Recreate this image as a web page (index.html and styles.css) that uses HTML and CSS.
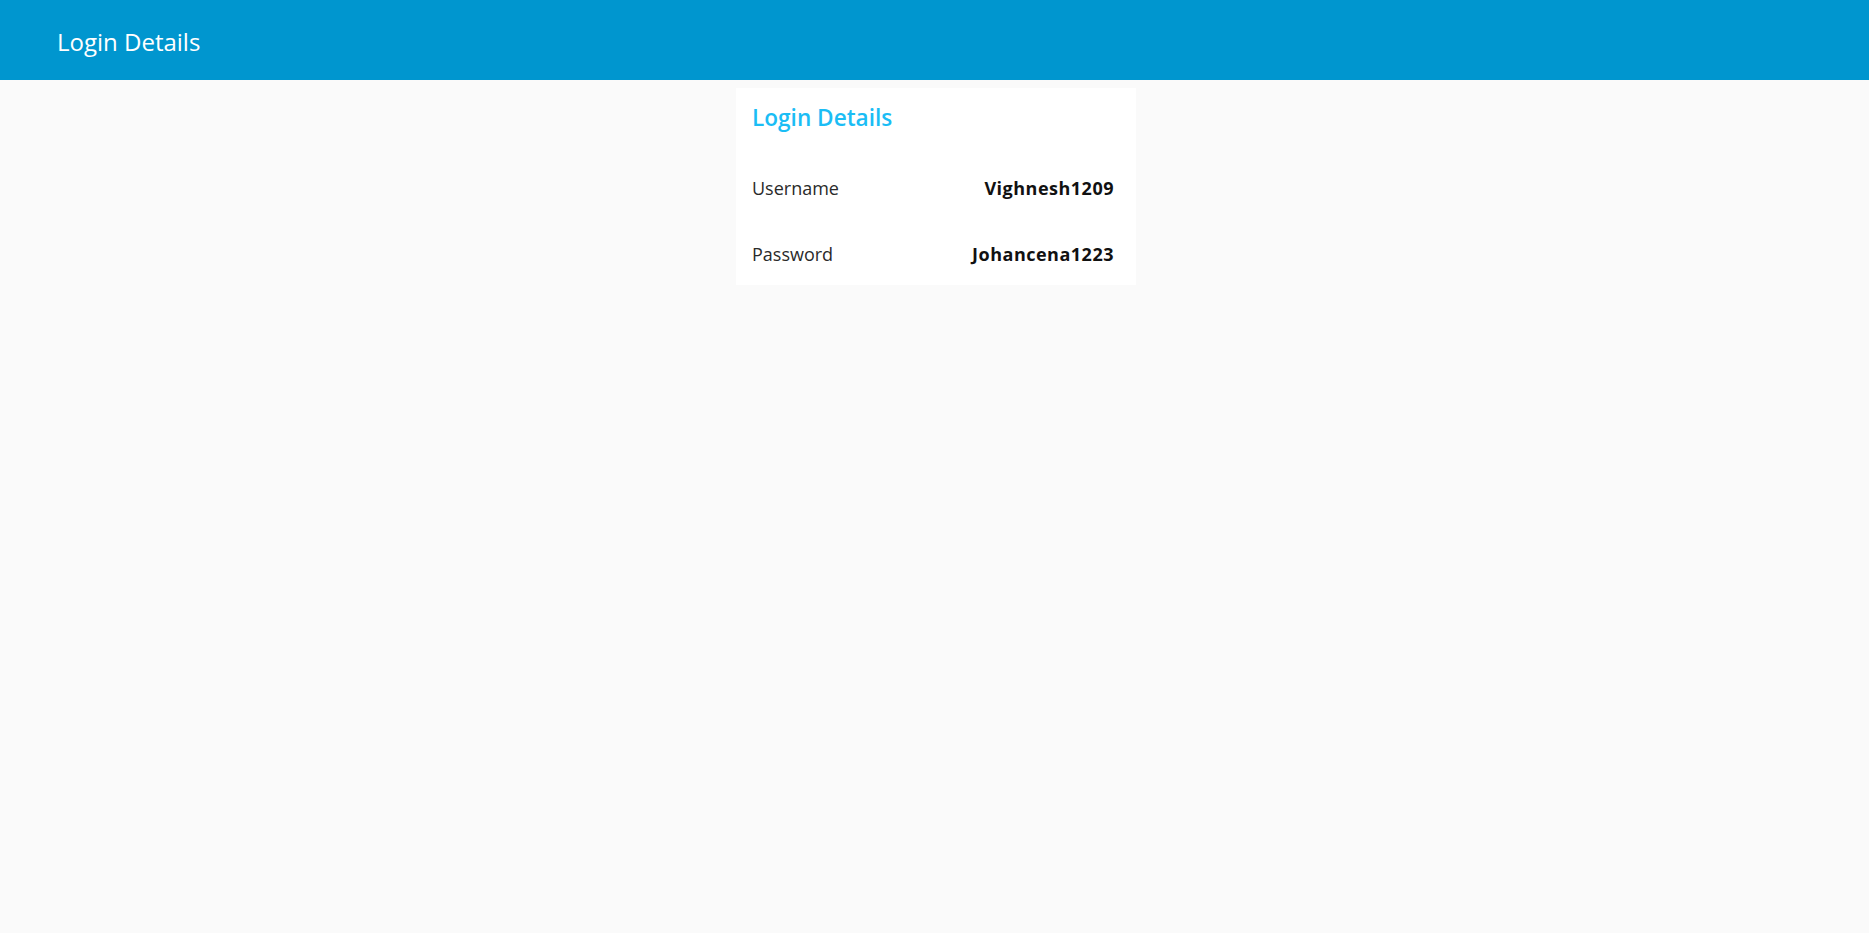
FILE: index.html
```html
<!DOCTYPE html>
<html>
<head>
<meta charset="utf-8">
<link rel="stylesheet" href="styles.css">
</head>
<body>
<header class="topbar"><span class="topbar-title">Login Details</span></header>
<main class="content">
  <section class="card">
    <h2 class="card-title">Login Details</h2>
    <div class="row"><span class="label">Username</span><span class="value">Vighnesh1209</span></div>
    <div class="row"><span class="label">Password</span><span class="value">Johancena1223</span></div>
  </section>
</main>
</body>
</html>
```

FILE: styles.css
```css
html, body {
  margin: 0;
  padding: 0;
  background: #fafafa;
  font-family: "Open Sans", "Noto Sans", sans-serif;
}
.topbar {
  height: 80px;
  background: #0096cf;
  display: flex;
  align-items: center;
  padding-left: 57px;
}
.topbar-title {
  color: #fff;
  font-size: 24px;
  margin-top: 2px;
}
.content {
  display: flex;
  justify-content: center;
  padding-top: 8px;
  padding-left: 3px;
}
.card {
  width: 400px;
  height: 197px;
  background: #fff;
  box-sizing: border-box;
  padding: 14px 22px 0 16px;
}
.card-title {
  margin: 0;
  color: #1bbdf5;
  font-size: 22.6px;
  font-weight: 600;
  line-height: 32px;
}
.row {
  display: flex;
  justify-content: space-between;
  align-items: baseline;
  font-size: 18px;
  color: #2a2a2a;
}
.row:first-of-type { margin-top: 42px; }
.row + .row { margin-top: 42px; }
.label { font-weight: 400; }
.value { font-weight: 700; color: #111; letter-spacing: 0.5px; }
```
